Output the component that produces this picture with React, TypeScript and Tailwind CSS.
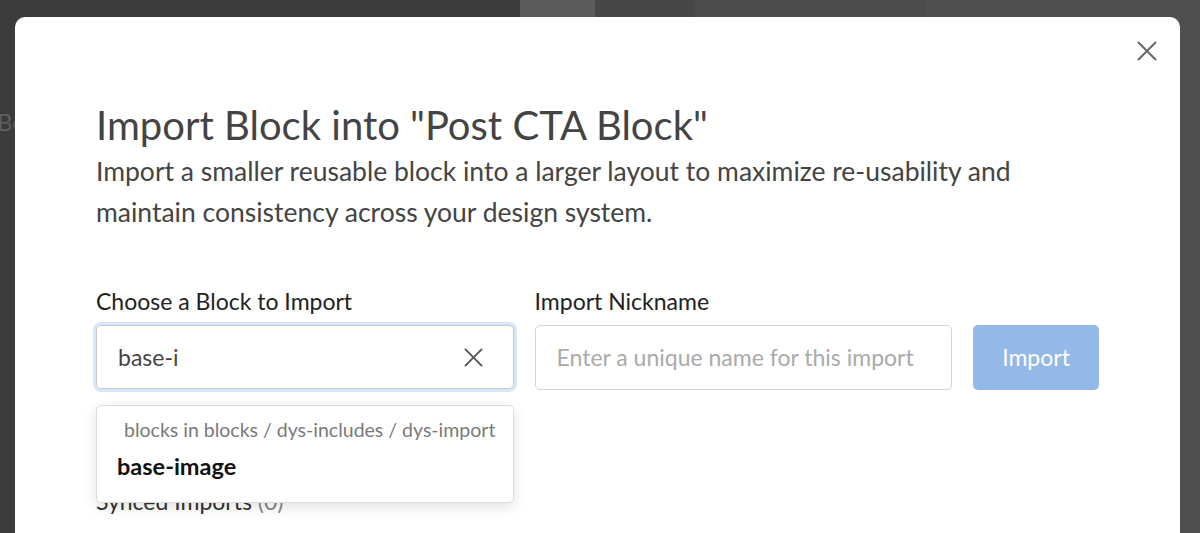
import React from 'react';

const font = { fontFamily: 'Lato, "Noto Sans", sans-serif' };

function Cross({ className }: { className?: string }) {
  return (
    <svg viewBox="0 0 20 20" className={className} fill="none" stroke="currentColor" strokeWidth={2} strokeLinecap="round">
      <path d="M1.5 1.5 18.5 18.5M18.5 1.5 1.5 18.5" />
    </svg>
  );
}

export default function App() {
  return (
    <div className="relative h-[533px] w-[1200px] overflow-hidden bg-[#3b3b3b]" style={font}>
      {/* backdrop behind the overlay */}
      <div className="flex h-full">
        <div className="w-[520px] bg-[#3b3b3b] pt-[104px]">
          <div className="-ml-[3px] text-[24px] text-[#5e5e5e]">Bo</div>
        </div>
        <div className="w-[75px] bg-[#5c5c5c]" />
        <div className="w-[100px] bg-[#474747]" />
        <div className="w-[230px] bg-[#4b4b4b]" />
        <div className="flex-1 bg-[#4f4f4f]" />
      </div>

      {/* modal */}
      <div className="absolute left-[15px] top-[17px] h-[560px] w-[1165px] rounded-[10px] bg-white">
        <button className="absolute left-[1122px] top-[24px] text-[#666]">
          <Cross className="h-[20px] w-[20px]" />
        </button>

        <div className="px-[81px] pt-[84px]">
          <h1 className="text-[40px] leading-[48px] text-[#444]">Import Block into "Post CTA Block"</h1>
          <p className="mt-[2px] text-[26.5px] leading-[41px] text-[#444]">
            Import a smaller reusable block into a larger layout to maximize re-usability and maintain consistency across your design system.
          </p>

          <div className="mt-[53px] flex items-start gap-[21px]">
            <div className="relative w-[418px]">
              <label className="block text-[23px] leading-[30px] text-[#222]">Choose a Block to Import</label>
              <div className="mt-[9px] flex h-[64px] items-center justify-between rounded-[5px] border border-[#c9c9c9] pl-[21px] pr-[30px] shadow-[0_0_0_3px_#d6e6f8]">
                <span className="text-[23px] text-[#444]">base-i</span>
                <Cross className="h-[19px] w-[19px] text-[#555]" />
              </div>

              {/* suggestions */}
              <div className="absolute left-0 top-[119px] z-10 w-[418px] rounded-[5px] border border-[#dcdcdc] bg-white pb-[22px] pl-[20px] pt-[10px] shadow-[0_4px_14px_rgba(0,0,0,0.12)]">
                <div className="pl-[7px] text-[19.5px] leading-[28px] text-[#7a7a7a]">blocks in blocks / dys-includes / dys-import</div>
                <div className="mt-[8px] text-[23.5px] font-bold leading-[28px] text-[#111]">base-image</div>
              </div>
            </div>

            <div className="w-[418px]">
              <label className="block text-[23px] leading-[30px] text-[#222]">Import Nickname</label>
              <div className="mt-[9px] flex h-[65px] items-center rounded-[5px] border border-[#d4d4d4] px-[21px]">
                <span className="text-[23px] text-[#aaa]">Enter a unique name for this import</span>
              </div>
            </div>

            <button className="mt-[39px] h-[65px] w-[126px] rounded-[5px] bg-[#94b9e9] text-[23px] text-white">Import</button>
          </div>

          <div className="mt-[96px] text-[23px] leading-[30px] text-[#333]">
            Synced Imports <span className="text-[#888]">(0)</span>
          </div>
        </div>
      </div>
    </div>
  );
}
